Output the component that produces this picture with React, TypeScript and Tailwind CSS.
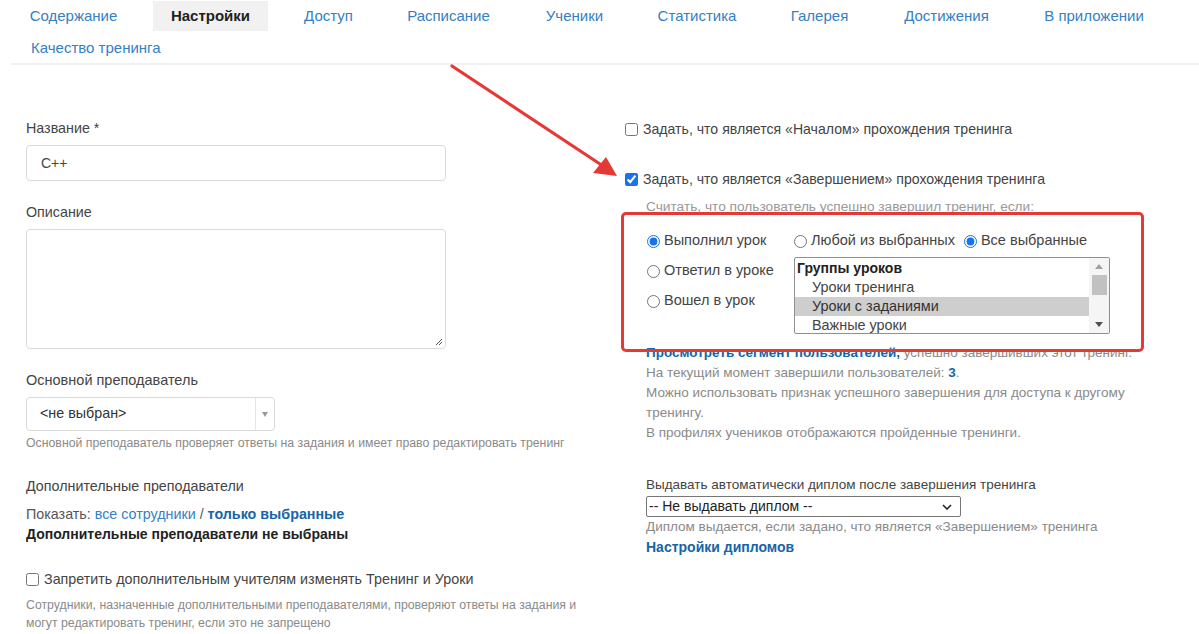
import React from "react";

const tabs: { label: string; w: string; active?: boolean }[] = [
  { label: "Содержание", w: "w-[125px]" },
  { label: "Настройки", w: "w-[115px]", active: true },
  { label: "Доступ", w: "w-[87px]" },
  { label: "Расписание", w: "w-[119px]" },
  { label: "Ученики", w: "w-[99px]" },
  { label: "Статистика", w: "w-[112px]" },
  { label: "Галерея", w: "w-[99px]" },
  { label: "Достижения", w: "w-[121px]" },
  { label: "В приложении", w: "w-[140px]" },
  { label: "Качество тренинга", w: "px-[20px]" },
];

function Radio({ checked }: { checked?: boolean }) {
  return (
    <input
      type="radio"
      readOnly
      checked={!!checked}
      className="m-0 w-[13px] h-[13px] shrink-0 accent-[#1a73e8]"
    />
  );
}

function Check({ checked }: { checked?: boolean }) {
  return (
    <input
      type="checkbox"
      readOnly
      checked={!!checked}
      className="m-0 w-[13px] h-[13px] shrink-0 accent-[#1a73e8]"
    />
  );
}

export default function App() {
  return (
    <div
      className="relative w-[1199px] h-[634px] overflow-hidden bg-white text-[#444]"
      style={{ fontFamily: '"Liberation Sans", Arial, sans-serif' }}
    >
      {/* Tabs */}
      <div className="ml-[11px] pt-[1px] border-b-2 border-[#f1f1f1]">
        <div className="flex flex-wrap gap-x-[17px] gap-y-[2px] w-[1180px]">
          {tabs.map((t) => (
            <div
              key={t.label}
              className={`${t.w} h-[30px] flex items-center justify-center text-[15px] whitespace-nowrap ${
                t.active ? "bg-[#f1f1f1] font-bold text-[#1f1f1f]" : "text-[#3580c4]"
              }`}
            >
              {t.label}
            </div>
          ))}
        </div>
      </div>

      <div className="flex">
        {/* Left column */}
        <div className="ml-[26px] w-[420px] pt-[53px]">
          <div className="text-[14.3px] leading-[20px] text-[#444]">Название *</div>
          <div className="mt-[7px] h-[36px] border border-[#d9d9d9] rounded-[4px] flex items-center pl-[14px] text-[14px] text-[#444]">
            C++
          </div>
          <div className="mt-[21px] text-[14.3px] leading-[20px]">Описание</div>
          <div className="mt-[7px] h-[120px] border border-[#d9d9d9] rounded-[4px] relative">
            <svg className="absolute right-[2px] bottom-[2px]" width="9" height="9" viewBox="0 0 9 9">
              <path d="M8 2 L2 8 M8 5 L5 8" stroke="#555" strokeWidth="1" />
            </svg>
          </div>
          <div className="mt-[21px] text-[14.5px] leading-[20px]">Основной преподаватель</div>
          <div className="mt-[7px] w-[249px] h-[34px] border border-[#d9d9d9] rounded-[4px] flex items-stretch">
            <div className="flex-1 flex items-center pl-[13px] text-[14.3px] text-[#333]">&lt;не выбран&gt;</div>
            <div className="w-[19px] border-l border-[#e5e5e5] flex items-center justify-center">
              <svg width="6" height="5" viewBox="0 0 6 5">
                <path d="M0 0 L6 0 L3 5 Z" fill="#999" />
              </svg>
            </div>
          </div>
          <div className="mt-[4px] text-[12.3px] leading-[16px] text-[#8a8a8a] whitespace-nowrap">
            Основной преподаватель проверяет ответы на задания и имеет право редактировать тренинг
          </div>
          <div className="mt-[25px] text-[14.3px] leading-[20px]">Дополнительные преподаватели</div>
          <div className="mt-[8px] text-[14.3px] leading-[20px] whitespace-nowrap">
            <span className="text-[#555]">Показать: </span>
            <span className="text-[#3580c4]">все сотрудники</span>
            <span className="text-[#555]"> / </span>
            <span className="text-[#1565a8] font-bold">только выбранные</span>
          </div>
          <div className="text-[14px] leading-[20px] font-bold text-[#222] whitespace-nowrap">
            Дополнительные преподаватели не выбраны
          </div>
          <div className="mt-[25px] flex items-center gap-[5px] text-[14.3px] leading-[20px] whitespace-nowrap">
            <Check />
            <span>Запретить дополнительным учителям изменять Тренинг и Уроки</span>
          </div>
          <div className="mt-[7px] text-[12.3px] leading-[18px] text-[#8a8a8a] w-[560px]">
            Сотрудники, назначенные дополнительными преподавателями, проверяют ответы на задания и могут редактировать тренинг, если это не запрещено
          </div>
        </div>

        {/* Right column */}
        <div className="ml-[179px] w-[560px] pt-[54px]">
          <div className="flex items-center gap-[5px] text-[14.1px] leading-[20px] whitespace-nowrap">
            <Check />
            <span>Задать, что является «Началом» прохождения тренинга</span>
          </div>
          <div className="mt-[30px] flex items-center gap-[5px] text-[14.1px] leading-[20px] whitespace-nowrap">
            <Check checked />
            <span>Задать, что является «Завершением» прохождения тренинга</span>
          </div>
          <div className="pl-[21px]">
            <div className="mt-[10px] text-[13.7px] leading-[16px] text-[#999] whitespace-nowrap">
              Считать, что пользователь успешно завершил тренинг, если:
            </div>
            <div className="mt-[16px] flex text-[14.5px] text-[#444]">
              <div className="w-[148px] pl-[1px] flex flex-col">
                <div className="h-[20px] flex items-center gap-[4px]">
                  <Radio checked />
                  <span>Выполнил урок</span>
                </div>
                <div className="mt-[10px] h-[20px] flex items-center gap-[4px]">
                  <Radio />
                  <span>Ответил в уроке</span>
                </div>
                <div className="mt-[10px] h-[20px] flex items-center gap-[4px]">
                  <Radio />
                  <span>Вошел в урок</span>
                </div>
              </div>
              <div className="flex flex-col">
                <div className="h-[20px] flex items-center whitespace-nowrap">
                  <Radio />
                  <span className="ml-[4px]">Любой из выбранных</span>
                  <span className="ml-[9px] flex items-center"><Radio checked /></span>
                  <span className="ml-[4px]">Все выбранные</span>
                </div>
                <div className="mt-[6px] w-[316px] h-[77px] border border-[#8f8f8f] rounded-[2px] flex overflow-hidden text-[14.4px]">
                  <div className="flex-1 pt-[1px]">
                    <div className="h-[19px] leading-[19px] pl-[2px] font-bold text-[14px] text-[#222]">Группы уроков</div>
                    <div className="h-[19px] leading-[19px] pl-[17px] text-[#444]">Уроки тренинга</div>
                    <div className="h-[19px] leading-[19px] pl-[17px] text-[#333] bg-[#cecece]">Уроки с заданиями</div>
                    <div className="h-[19px] leading-[19px] pl-[17px] text-[#444]">Важные уроки</div>
                  </div>
                  <div className="w-[20px] bg-[#f5f5f5] flex flex-col items-center">
                    <div className="h-[17px] flex items-center justify-center">
                      <svg width="8" height="5" viewBox="0 0 8 5">
                        <path d="M0 5 L8 5 L4 0 Z" fill="#a3a3a3" />
                      </svg>
                    </div>
                    <div className="w-[15px] h-[20px] bg-[#c1c1c1]" />
                    <div className="flex-1" />
                    <div className="h-[17px] flex items-center justify-center">
                      <svg width="8" height="5" viewBox="0 0 8 5">
                        <path d="M0 0 L8 0 L4 5 Z" fill="#505050" />
                      </svg>
                    </div>
                  </div>
                </div>
              </div>
            </div>

            <div className="mt-[9px] text-[13.5px] leading-[20px] text-[#8a8a8a]">
              <div className="whitespace-nowrap">
                <span className="font-bold text-[#1565a8]">Просмотреть сегмент пользователей,</span> успешно завершивших этот тренинг.
              </div>
              <div className="whitespace-nowrap">
                На текущий момент завершили пользователей: <span className="font-bold text-[#1565a8]">3</span>.
              </div>
              <div className="w-[495px]">
                Можно использовать признак успешного завершения для доступа к другому тренингу.
              </div>
              <div className="whitespace-nowrap">В профилях учеников отображаются пройденные тренинги.</div>
            </div>

            <div className="mt-[32px] text-[13.5px] leading-[20px] text-[#444] whitespace-nowrap">
              Выдавать автоматически диплом после завершения тренинга
            </div>
            <div className="mt-[1px] w-[315px] h-[21px] border border-[#767676] rounded-[2px] flex items-center justify-between pl-[2px] pr-[8px] text-[14px] text-[#222]">
              <span>-- Не выдавать диплом --</span>
              <svg width="10" height="6" viewBox="0 0 10 6">
                <path d="M1 1 L5 5 L9 1" stroke="#222" strokeWidth="1.6" fill="none" />
              </svg>
            </div>
            <div className="text-[13.5px] leading-[20px] text-[#8a8a8a] whitespace-nowrap">
              Диплом выдается, если задано, что является «Завершением» тренинга
            </div>
            <div className="text-[14px] leading-[20px] font-bold text-[#1565a8]">Настройки дипломов</div>
          </div>
        </div>
      </div>

      {/* Annotation overlays */}
      <div className="absolute left-[621px] top-[212px] w-[523px] h-[140px] border-[3px] border-[#e53935] rounded-[5px] pointer-events-none" />
      <svg className="absolute left-0 top-0 pointer-events-none" width="1199" height="634" viewBox="0 0 1199 634">
        <line x1="452" y1="66" x2="603" y2="166" stroke="#e53935" strokeWidth="3.2" strokeLinecap="round" />
        <path d="M617 176 L593 173 L606 157 Z" fill="#e53935" />
      </svg>
    </div>
  );
}
